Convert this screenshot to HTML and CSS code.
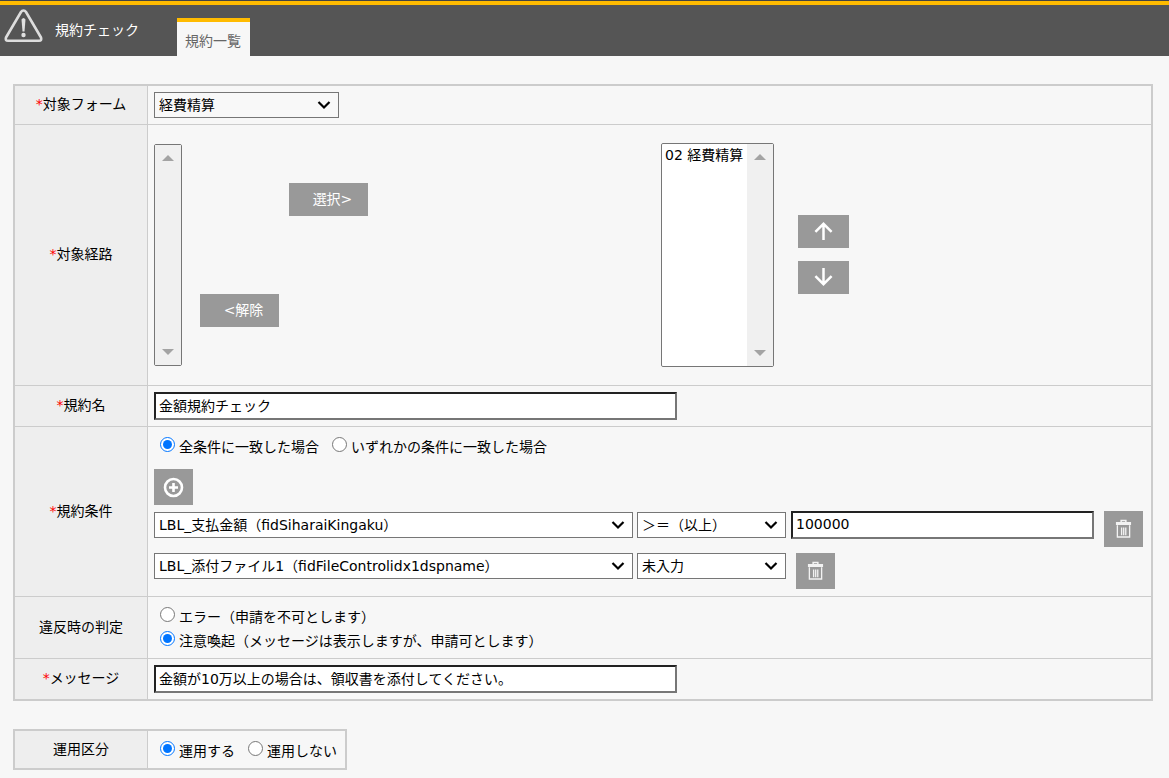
FILE: index.html
```html
<!DOCTYPE html>
<html lang="ja">
<head>
<meta charset="utf-8">
<title>規約チェック</title>
<link rel="stylesheet" href="styles.css">
</head>
<body>
<svg class="sprite" aria-hidden="true">
  <symbol id="trash" viewBox="0 0 18 20">
    <path d="M6.500 2.500V1h5v1.500M1 3.500h16M1 5h16" fill="none" stroke="#f2f2f2" stroke-width="1.600"/>
    <path d="M2.500 6v12.500h13V6M7 8.500v8M9.200 8.500v8M11.400 8.500v8" fill="none" stroke="#f2f2f2" stroke-width="1.400"/>
  </symbol>
</svg>
<header class="header">
  <svg class="warning" viewBox="0 0 40 36" aria-hidden="true">
    <path d="M19.500 2.500 Q21 2.500 22 4 L37 29.500 Q38 32.800 35 32.800 H4 Q1 32.800 2 29.500 L17 4 Q18 2.500 19.500 2.500Z" fill="none" stroke="#ddd" stroke-width="2.600" stroke-linejoin="round"/>
    <path d="M17.500 11.500 Q19.500 8.500 21.500 11.500 L20.500 23.500 H18.500Z" fill="#e0e0e0"/>
    <circle cx="19.500" cy="27" r="2.200" fill="#e0e0e0"/>
  </svg>
  <h1 class="title">規約チェック</h1>
  <a class="tab" href="#">規約一覧</a>
</header>
<main class="main">
  <form>
    <table class="form-table wide">
      <tr>
        <th scope="row"><label for="form"><span class="req">*</span>対象フォーム</label></th>
        <td><select id="form" class="select target"><option>経費精算</option></select></td>
      </tr>
      <tr>
        <th scope="row"><span class="req">*</span>対象経路</th>
        <td class="route-cell">
          <div class="routes">
            <div class="listbox empty">
              <select multiple size="10" aria-label="選択可能な経路"></select>
              <span class="track"><i class="up"></i><i class="down"></i></span>
            </div>
            <div class="movers">
              <button type="button" class="btn move add">選択&gt;</button>
              <button type="button" class="btn move">&lt;解除</button>
            </div>
            <div class="listbox chosen">
              <select multiple size="10" aria-label="選択済みの経路"><option>02 経費精算</option></select>
              <span class="track"><i class="up"></i><i class="down"></i></span>
            </div>
            <div class="order">
              <button type="button" class="btn arrow" aria-label="上へ"><svg width="21" height="21" viewBox="0 0 22 22"><path d="M11 20V3M2.500 11.500 11 3l8.500 8.500"/></svg></button>
              <button type="button" class="btn arrow" aria-label="下へ"><svg width="21" height="21" viewBox="0 0 22 22"><path d="M11 1v17M2.500 9.500 11 18l8.500-8.500"/></svg></button>
            </div>
          </div>
        </td>
      </tr>
      <tr>
        <th scope="row"><label for="name"><span class="req">*</span>規約名</label></th>
        <td><input id="name" class="text long" type="text" value="金額規約チェック"></td>
      </tr>
      <tr>
        <th scope="row"><span class="req">*</span>規約条件</th>
        <td class="conditions">
          <div class="radios">
            <label class="radio"><input type="radio" name="match" checked>全条件に一致した場合</label>
            <label class="radio"><input type="radio" name="match">いずれかの条件に一致した場合</label>
          </div>
          <button type="button" class="btn square plus" aria-label="条件を追加"><svg width="21" height="21" viewBox="0 0 21 21"><circle cx="10.500" cy="10.500" r="8.500"/><path d="M10.500 6v9M6 10.500h9"/></svg></button>
          <div class="condition">
            <div class="fields">
              <select class="select item" aria-label="項目"><option>LBL_支払金額（fidSiharaiKingaku）</option></select>
              <select class="select operator" aria-label="比較"><option>＞＝（以上）</option></select>
              <input class="text value" type="text" value="100000" aria-label="値">
            </div>
            <button type="button" class="btn square" aria-label="削除"><svg width="17" height="20"><use href="#trash"/></svg></button>
          </div>
          <div class="condition">
            <div class="fields">
              <select class="select item" aria-label="項目"><option>LBL_添付ファイル1（fidFileControlidx1dspname）</option></select>
              <select class="select operator" aria-label="比較"><option>未入力</option></select>
            </div>
            <button type="button" class="btn square" aria-label="削除"><svg width="17" height="20"><use href="#trash"/></svg></button>
          </div>
        </td>
      </tr>
      <tr>
        <th scope="row">違反時の判定</th>
        <td class="radio-cell">
          <label class="radio"><input type="radio" name="level">エラー（申請を不可とします）</label>
          <label class="radio"><input type="radio" name="level" checked>注意喚起（メッセージは表示しますが、申請可とします）</label>
        </td>
      </tr>
      <tr>
        <th scope="row"><label for="message"><span class="req">*</span>メッセージ</label></th>
        <td><input id="message" class="text long" type="text" value="金額が10万以上の場合は、領収書を添付してください。"></td>
      </tr>
    </table>
    <table class="form-table">
      <tr>
        <th scope="row">運用区分</th>
        <td class="radio-cell">
          <div class="radios">
            <label class="radio"><input type="radio" name="active" checked>運用する</label>
            <label class="radio"><input type="radio" name="active">運用しない</label>
          </div>
        </td>
      </tr>
    </table>
  </form>
</main>
</body>
</html>
```
FILE: styles.css
```css
* { box-sizing: border-box; }

body,
button,
input,
select {
  font-family: "DejaVu Sans", "Noto Sans CJK JP", sans-serif;
  font-size: 14px;
}

body {
  margin: 0;
  background: #f7f7f7;
  color: #000;
  line-height: 24px;
}

.sprite { position: absolute; width: 0; height: 0; }

.header {
  display: flex;
  height: 56px;
  padding-left: 4px;
  border-top: 1px solid #444;
  background: linear-gradient(#fb0 4px, #555 4px);
}

.warning { width: 40px; height: 36px; margin-top: 7px; }

.title {
  width: 122px;
  margin: 17px 0 0 11px;
  color: #fff;
  font-size: 14px;
  font-weight: 400;
}

.tab {
  margin-top: 17px;
  padding: 7px 9px 0 8px;
  border-top: 4px solid #fb0;
  background: #f7f7f7;
  color: #666;
  text-decoration: none;
}

.main { padding: 28px 16px 0 13px; }

.form-table {
  margin-bottom: 28px;
  border: 2px solid #ccc;
  border-spacing: 0;
}

.wide { width: 100%; }

.form-table th {
  width: 133px;
  padding: 0 0 2px;
  border-right: 1px solid #ccc;
  background: #eee;
  font-weight: 400;
}

.form-table td { padding: 6px; }

.form-table tr:not(:last-child) > * { border-bottom: 1px solid #ccc; }

.req { color: #f00; }

.select {
  display: block;
  height: 26px;
  padding: 0 24px 1px 4px;
  border: 1px solid #767676;
  border-radius: 0;
  appearance: none;
  background: #fff url("data:image/svg+xml,%3Csvg xmlns='http://www.w3.org/2000/svg' width='14' height='10'%3E%3Cpath d='M1.500 2 7 7.500 12.500 2' fill='none' stroke='%23000' stroke-width='2.200'/%3E%3C/svg%3E") no-repeat right 7px center;
  color: #000;
}

.target { width: 185px; background-color: #f8f8f8; }

.text {
  display: block;
  height: 28px;
  padding: 0 3px 2px;
  border: 2px solid;
  border-color: #222 #767676 #767676 #222;
  background: #fff;
  color: #000;
}

.long { width: 523px; max-width: 100%; }

.btn {
  display: flex;
  align-items: center;
  justify-content: center;
  padding: 0;
  border: 0;
  background: #999;
  color: #fff;
}

.btn svg {
  fill: none;
  stroke: #fff;
  stroke-width: 2.6;
}

.form-table .route-cell { padding: 18px 6px; }

.routes { display: flex; align-items: center; }

.listbox {
  display: flex;
  border: 1px solid #767676;
  border-radius: 2px;
  background: #fff;
}

.listbox select {
  flex: 1;
  min-width: 0;
  padding: 0;
  border: 0;
  overflow: hidden;
  scrollbar-width: none;
  background: #fff;
}

.listbox option {
  min-height: 20px;
  padding: 0 3px;
  line-height: 20px;
}

.empty { width: 28px; height: 222px; }
.empty select { width: 0; }
.chosen { width: 113px; height: 224px; margin-left: 293px; }

.track {
  display: flex;
  flex-direction: column;
  align-items: center;
  justify-content: space-between;
  width: 26px;
  padding: 10px 0;
  background: #f0f0f0;
}

.up,
.down {
  border: 6px solid transparent;
}

.up { border-top: 0; border-bottom-color: #a3a3a3; }
.down { border-bottom: 0; border-top-color: #a3a3a3; }

.movers {
  display: flex;
  flex-direction: column;
  gap: 78px;
  width: 168px;
  margin-left: 18px;
}

.move {
  width: 79px;
  height: 33px;
  padding: 0 0 4px 8px;
}

.add { align-self: flex-end; }

.order {
  display: flex;
  flex-direction: column;
  gap: 13px;
  margin: 0 0 2px 24px;
}

.arrow { width: 51px; height: 33px; }

.form-table .conditions { padding: 8px 6px 7px; }

.radios { display: flex; gap: 13px; }

.radio { display: flex; align-items: center; }

.radio input {
  width: 15px;
  height: 15px;
  margin: 0 4px 6px 6px;
}

.radios .radio + .radio input { margin-left: 0; }

.form-table .radio-cell { padding: 8px 8px 5px 6px; }

.square { width: 39px; height: 36px; }
.plus { margin-top: 10px; }

.condition {
  display: flex;
  align-items: flex-start;
  gap: 10px;
  margin-top: 6px;
}

.fields {
  display: flex;
  align-items: center;
  gap: 4px;
}

.item { width: 479px; }
.operator { width: 149px; }
.value { width: 303px; margin-left: 1px; }
```
